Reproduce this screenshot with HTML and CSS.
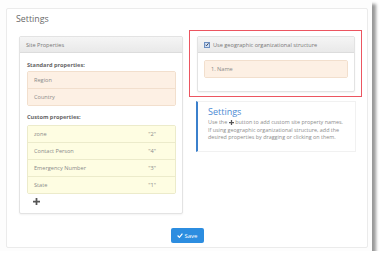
FILE: index.html
```html
<!DOCTYPE html>
<html lang="en">
<head>
    <meta charset="UTF-8">
    <meta name="viewport" content="width=device-width, initial-scale=1.0">
    <title>Settings</title>
    <link rel="stylesheet" href="styles.css">
</head>
<body>
    <div class="shot">
        <div class="card">
            <h1 class="card-title">Settings</h1>

            <div class="columns">
                <div class="panel site-panel">
                    <div class="panel-head">Site Properties</div>
                    <div class="panel-body">
                        <div class="group-label">Standard properties:</div>
                        <ul class="prop-list standard">
                            <li>Region</li>
                            <li>Country</li>
                        </ul>

                        <div class="group-label custom-label">Custom properties:</div>
                        <ul class="prop-list custom">
                            <li><span>zone</span><span>"2"</span></li>
                            <li><span>Contact Person</span><span>"4"</span></li>
                            <li><span>Emergency Number</span><span>"3"</span></li>
                            <li><span>State</span><span>"1"</span></li>
                        </ul>

                        <button class="add-btn" type="button" aria-label="Add property">
                            <svg width="7" height="7" viewBox="0 0 8 8"><path d="M3 0h2v3h3v2H5v3H3V5H0V3h3z" fill="#555"/></svg>
                        </button>
                    </div>
                </div>

                <div class="side">
                    <div class="geo-wrap">
                        <div class="panel geo-panel">
                            <div class="panel-head">
                                <span class="check">
                                    <svg width="5" height="5" viewBox="0 0 8 8"><path d="M1 4.5l2 2L7 1.5" stroke="#223" stroke-width="1.6" fill="none"/></svg>
                                </span>
                                Use geographic organizational structure
                            </div>
                            <div class="panel-body">
                                <ul class="prop-list standard">
                                    <li>1. Name</li>
                                </ul>
                            </div>
                        </div>
                        <div class="highlight"></div>
                    </div>

                    <div class="help">
                        <h2>Settings</h2>
                        <div class="help-text">
                            <div class="help-line">
                                <span>Use the</span>
                                <svg width="5" height="5" viewBox="0 0 8 8"><path d="M3 0h2v3h3v2H5v3H3V5H0V3h3z" fill="#555"/></svg>
                                <span>button to add custom site property names.</span>
                            </div>
                            <div>If using geographic organizational structure, add the</div>
                            <div>desired properties by dragging or clicking on them.</div>
                        </div>
                    </div>
                </div>
            </div>

            <div class="actions">
                <button class="save" type="button">
                    <svg width="6" height="5" viewBox="0 0 10 8"><path d="M1 4l3 3 5-6" stroke="#fff" stroke-width="2" fill="none"/></svg>
                    Save
                </button>
            </div>
        </div>
    </div>
</body>
</html>
```

FILE: styles.css
```css
body {
    margin: 0;
    padding: 0;
    background-color: #fff;
    font-family: 'Open Sans', sans-serif;
    color: #888;
}
.shot {
    width: 372px;
    height: 251px;
    padding: 8px 0 0 6px;
    box-sizing: border-box;
    background-color: #fdfdfd;
    box-shadow: 4px 4px 3px rgba(0, 0, 0, 0.4);
}
.card {
    width: 362px;
    height: 240px;
    box-sizing: border-box;
    background: #fff;
    border: 1px solid #ebebeb;
    border-radius: 2px;
}
.card-title {
    margin: 0;
    height: 27px;
    padding: 4px 0 0 9px;
    box-sizing: border-box;
    font-size: 8.8px;
    font-weight: normal;
    color: #6a6a6a;
}
.columns {
    display: grid;
    grid-template-columns: 164px 158px;
    gap: 14px;
    padding: 0 12px;
    align-items: start;
}
.panel {
    background: #fff;
    border: 1px solid #e3e3e3;
    border-radius: 2px;
    box-shadow: 0 1px 2px rgba(0, 0, 0, 0.05);
}
.panel-head {
    height: 15px;
    display: flex;
    align-items: center;
    padding: 0 6px;
    font-size: 5.6px;
    color: #777;
    background: linear-gradient(#f5f5f5, #e9e9e9);
    border-bottom: 1px solid #dcdcdc;
}
.panel-body {
    padding: 8px 6px 8px 7px;
}
.group-label {
    font-size: 5.6px;
    font-weight: bold;
    color: #666;
    line-height: 8px;
    margin-bottom: 2px;
}
.custom-label {
    margin-top: 7px;
    margin-bottom: 4px;
}
.prop-list {
    list-style: none;
    margin: 0;
    padding: 0;
    border: 1px solid #f2dfcd;
    border-radius: 2px;
    font-size: 5.6px;
    color: #8a8a8a;
}
.prop-list li {
    height: 16px;
    display: flex;
    align-items: center;
    justify-content: space-between;
    padding: 0 19px 0 6px;
}
.prop-list li + li {
    border-top: 1px solid #f2dfcd;
}
.standard li {
    background: #fdf0e4;
}
.custom {
    border-color: #ecebcb;
}
.custom li {
    background: #fefde2;
}
.custom li + li {
    border-top-color: #ecebcb;
}
.add-btn {
    background: none;
    border: none;
    padding: 0;
    margin: 4px 0 0 6px;
    display: block;
    height: 7px;
    cursor: pointer;
}
.add-btn svg {
    display: block;
}
.side {
    display: flex;
    flex-direction: column;
}
.geo-wrap {
    position: relative;
}
.highlight {
    position: absolute;
    top: -6px;
    left: -8px;
    right: -7px;
    bottom: -5px;
    border: 1.5px solid #ec5560;
    pointer-events: none;
}
.geo-panel .panel-head {
    gap: 3px;
}
.check {
    width: 6px;
    height: 6px;
    box-sizing: border-box;
    border: 1px solid #6d8fc0;
    background: #cfe0f6;
    display: flex;
    align-items: center;
    justify-content: center;
}
.check svg {
    display: block;
}
.geo-panel .panel-body {
    padding: 7px 6px 13px 6px;
}
.help {
    margin: 9px 0 0 -1px;
    width: 160px;
    box-sizing: border-box;
    border: 1px solid #f1f1f1;
    border-left: 2px solid #3b80cc;
    padding: 4px 8px 9px 10px;
}
.help h2 {
    margin: 0 0 2px;
    font-size: 9px;
    line-height: 11px;
    font-weight: normal;
    color: #4a8ad4;
}
.help-text {
    font-size: 5.4px;
    line-height: 7.5px;
    color: #8c8c8c;
    white-space: nowrap;
}
.help-line {
    display: flex;
    align-items: center;
    gap: 1.5px;
}
.actions {
    display: flex;
    justify-content: center;
    margin-top: 14px;
}
.save {
    height: 15px;
    width: 33px;
    border: none;
    border-radius: 2px;
    background-color: #2c8de0;
    color: #fff;
    font-family: 'Open Sans', sans-serif;
    font-size: 6px;
    display: flex;
    align-items: center;
    justify-content: center;
    gap: 2px;
    padding: 0;
    cursor: pointer;
}
```
